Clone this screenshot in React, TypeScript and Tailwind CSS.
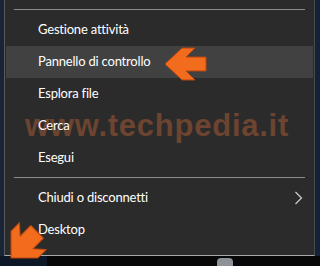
import React from "react";

const font = { fontFamily: "Lato, 'Open Sans', Arial, sans-serif" };

function Row({ label, active, chevron }: { label: string; active?: boolean; chevron?: boolean }) {
  return (
    <div
      className={`relative z-10 mx-[1px] h-[32px] flex items-center pl-[32px] pr-[9px] text-[13px] tracking-[-0.2px] text-white ${
        active ? "bg-[#414141]" : ""
      }`}
      style={font}
    >
      <span className="flex-1">{label}</span>
      {chevron && (
        <svg width="9" height="14" viewBox="0 0 9 14" className="mr-[1px]">
          <path d="M1.5 1 L7.5 7 L1.5 13" fill="none" stroke="#cfcfcf" strokeWidth="1.2" />
        </svg>
      )}
    </div>
  );
}

function Sep() {
  return <div className="mx-[9px] h-[1px] bg-[#8a8a8a]" />;
}

export default function App() {
  return (
    <div className="relative w-[320px] h-[266px] overflow-hidden bg-[#152033]">
      <div className="flex h-[256px]">
        <div className="w-[4px] bg-[#182438]" />
        <div className="relative w-[311px] h-[256px] bg-[#2b2b2b] border-l border-r border-b border-l-[#5a5a5a] border-r-[#4a4a4a] border-b-[#a8a8a8] flex flex-col">
          <div className="h-[9px]" />
          <Sep />
          <div className="h-[4px]" />
          <Row label="Gestione attività" />
          <Row label="Pannello di controllo" active />
          <Row label="Esplora file" />
          <Row label="Cerca" />
          <Row label="Esegui" />
          <div className="h-[3px]" />
          <Sep />
          <div className="h-[4px]" />
          <Row label="Chiudi o disconnetti" chevron />
          <Row label="Desktop" />
          <div
            className="absolute left-[20px] top-[110px] z-0 text-[31px] leading-none font-bold tracking-[0.75px] text-[#6c4430] whitespace-nowrap pointer-events-none"
            style={{ fontFamily: "'Liberation Sans', Arial, sans-serif" }}
          >
            www.techpedia.it
          </div>
        </div>
        <div className="flex-1 bg-[#14213a]" />
      </div>
      <div className="flex h-[10px] bg-[#070707]">
        <div className="w-[47px] bg-[#0e1726]" />
        <div className="ml-[170px] mt-[2px] w-[16px] h-[8px] rounded-t-[4px] bg-[#8e9298]" />
      </div>
      <svg
        className="absolute left-0 top-0 z-20 pointer-events-none"
        width="320"
        height="266"
        viewBox="0 0 320 266"
      >
        <polygon
          points="165,64 182,48 195,48 186,57 206,57 206,71 186,71 195,80 182,80"
          fill="#f36b1c"
          stroke="#b5470f"
          strokeWidth="1"
          strokeLinejoin="round"
        />
        <g transform="translate(11,258) rotate(-45)">
          <polygon
            points="0,0 19,-19 31,-19 22,-9 37,-9 37,9 22,9 31,19 19,19"
            fill="#f36b1c"
            stroke="#b5470f"
            strokeWidth="1"
            strokeLinejoin="round"
          />
        </g>
      </svg>
    </div>
  );
}
